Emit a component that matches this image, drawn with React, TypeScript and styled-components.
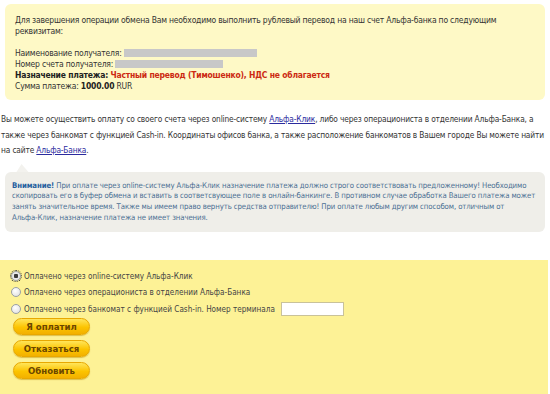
import React from "react";
import styled, { createGlobalStyle } from "styled-components";

const Global = createGlobalStyle`
  html, body { margin: 0; padding: 0; background: #ffffff; }
  body { width: 550px; height: 394px; overflow: hidden; font-family: "DejaVu Sans Condensed", "DejaVu Sans", sans-serif; font-stretch: condensed; color: #333; }
`;

const Page = styled.div`
  width: 550px;
  display: flex;
  flex-direction: column;
  padding-top: 4px;
`;

const Notice = styled.div`
  margin: 0 5px;
  background: #fef9c6;
  border-radius: 6px;
  padding: 11px 10px 8px 10px;
  font-size: 8.5px;
  letter-spacing: -0.2px;
  line-height: 11px;
  color: #333;
`;

const Line = styled.div<{ $gap?: number }>`
  margin-top: ${(p) => p.$gap ?? 0}px;
  white-space: nowrap;
`;

const Strong = styled.b`
  font-weight: bold;
  color: #222;
`;

const Red = styled.b`
  color: #cc2a12;
  font-weight: bold;
`;

const Redacted = styled.span<{ $w: number }>`
  display: inline-block;
  width: ${(p) => p.$w}px;
  height: 8px;
  background: #c8c8c8;
  vertical-align: -1px;
`;

const Para = styled.p`
  margin: 12px 0 0 0;
  padding: 0 0 0 1px;
  font-size: 8.3px;
  letter-spacing: -0.15px;
  line-height: 15.5px;
  color: #333;
  white-space: nowrap;
`;

const Link = styled.a`
  color: #2b2b9e;
  text-decoration: underline;
`;

const Info = styled.div`
  position: relative;
  margin: 13px 5px 0 5px;
  background: #efeee9;
  border-radius: 6px;
  padding: 9px 8px 9px 7px;
  font-size: 7.75px;
  letter-spacing: -0.1px;
  line-height: 10.7px;
  color: #4b6e93;
  white-space: nowrap;
  &::before {
    content: "";
    position: absolute;
    top: -8px;
    left: 10px;
    border-left: 8px solid transparent;
    border-right: 4px solid transparent;
    border-bottom: 8px solid #f3f2ee;
    transform: skewX(20deg);
  }
`;

const InfoStrong = styled.b`
  color: #1f5e9e;
`;

const Form = styled.div`
  margin-top: 28px;
  margin-right: 2px;
  background: #fdf296;
  padding: 7px 10px 14px 10px;
  display: flex;
  flex-direction: column;
  font-size: 8.1px;
  color: #444;
  flex: 1;
  min-height: 136px;
  box-sizing: border-box;
`;

const Option = styled.label`
  display: flex;
  align-items: center;
  height: 16.5px;
  gap: 3px;
  white-space: nowrap;
`;

const Radio = styled.input.attrs({ type: "radio", name: "paid" })`
  appearance: none;
  margin: 0 0 0 1px;
  width: 10px;
  height: 10px;
  border-radius: 50%;
  border: 1px solid #9aa0a6;
  background: radial-gradient(circle at 40% 35%, #ffffff, #dcdcdc);
  box-sizing: border-box;
  &:checked {
    background: radial-gradient(circle, #3a3a3a 0 2px, #e8e8e8 2.5px);
    outline: 1px dotted #333;
    outline-offset: 0px;
  }
`;

const Terminal = styled.input`
  margin-left: 3px;
  width: 63px;
  height: 14px;
  border: 1px solid #c9c29a;
  background: #ffffff;
  padding: 0;
  box-sizing: border-box;
`;

const Buttons = styled.div`
  display: flex;
  flex-direction: column;
  gap: 5px;
  margin-top: 1px;
  padding-left: 3px;
`;

const Button = styled.button`
  width: 77px;
  height: 17px;
  border-radius: 9px;
  border: 1px solid #e8a800;
  background: linear-gradient(#ffe55a, #fcc400 55%, #f2b000);
  color: #6a4600;
  font-family: "DejaVu Sans Condensed", "DejaVu Sans", sans-serif;
  font-stretch: condensed;
  font-weight: bold;
  font-size: 9.5px;
  padding: 0;
  text-align: center;
  box-shadow: 0 1px 1px rgba(190, 140, 0, 0.5);
`;

export default function App() {
  return (
    <>
      <Global />
      <Page>
        <Notice>
          <Line>
            Для завершения операции обмена Вам необходимо выполнить рублевый перевод на наш счет Альфа-банка по следующим
          </Line>
          <Line>реквизитам:</Line>
          <Line $gap={11}>
            Наименование получателя: <Redacted $w={133} />
          </Line>
          <Line>
            Номер счета получателя: <Redacted $w={108} />
          </Line>
          <Line>
            <Strong>Назначение платежа: </Strong>
            <Red>Частный перевод (Тимошенко), НДС не облагается</Red>
          </Line>
          <Line>
            Сумма платежа: <Strong>1000.00</Strong> RUR
          </Line>
        </Notice>
        <Para>
          Вы можете осуществить оплату со своего счета через online-систему <Link href="#">Альфа-Клик</Link>, либо
          через операциониста в отделении Альфа-Банка, а
          <br />
          также через банкомат с функцией Cash-in. Координаты офисов банка, а также расположение банкоматов в Вашем
          городе Вы можете найти
          <br />
          на сайте <Link href="#">Альфа-Банка</Link>.
        </Para>
        <Info>
          <InfoStrong>Внимание!</InfoStrong> При оплате через online-систему Альфа-Клик назначение платежа должно
          строго соответствовать предложенному! Необходимо
          <br />
          скопировать его в буфер обмена и вставить в соответсвующее поле в онлайн-банкинге. В противном случае
          обработка Вашего платежа может
          <br />
          занять значительное время. Также мы имеем право вернуть средства отправителю! При оплате любым другим
          способом, отличным от
          <br />
          Альфа-Клик, назначение платежа не имеет значения.
        </Info>
        <Form>
          <Option>
            <Radio defaultChecked />
            Оплачено через online-систему Альфа-Клик
          </Option>
          <Option>
            <Radio />
            Оплачено через операциониста в отделении Альфа-Банка
          </Option>
          <Option>
            <Radio />
            Оплачено через банкомат с функцией Cash-in. Номер терминала
            <Terminal type="text" />
          </Option>
          <Buttons>
            <Button>Я оплатил</Button>
            <Button>Отказаться</Button>
            <Button>Обновить</Button>
          </Buttons>
        </Form>
      </Page>
    </>
  );
}
